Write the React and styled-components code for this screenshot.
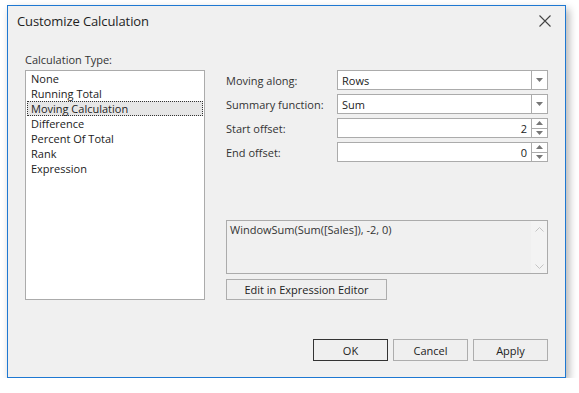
import React from "react";
import styled, { createGlobalStyle } from "styled-components";

const GlobalStyle = createGlobalStyle`
  html, body {
    margin: 0;
    padding: 0;
    background: #ffffff;
  }
  body {
    font-family: "Segoe UI", "Open Sans", "Noto Sans", sans-serif;
    font-size: 11px;
    color: #222222;
  }
`;

const calcTypes = [
  "None",
  "Running Total",
  "Moving Calculation",
  "Difference",
  "Percent Of Total",
  "Rank",
  "Expression"
];

// STYLED COMPONENTS

const Page = styled.div`
  padding: 5px 0 0 7px;
`;

const Window = styled.div`
  box-sizing: border-box;
  width: 559px;
  height: 373px;
  border: 1px solid #1e78d2;
  background: #f0f0f0;
  box-shadow: 3px 4px 8px rgba(0, 0, 0, 0.3);
  display: flex;
  flex-direction: column;
`;

const TitleBar = styled.div`
  height: 30px;
  display: flex;
  align-items: center;
  justify-content: space-between;
  padding: 0 14px 0 9px;
  font-family: "Open Sans", "Noto Sans", sans-serif;
  font-size: 13px;
  letter-spacing: -0.1px;
  color: #1e1e1e;
`;

const CloseButton = styled.svg`
  width: 12px;
  height: 12px;
`;

const Body = styled.div`
  flex: 1;
  display: flex;
  gap: 21px;
  padding: 16px 17px 0 17px;
`;

const LeftColumn = styled.div`
  width: 180px;
  display: flex;
  flex-direction: column;
  gap: 2px;
`;

const Caption = styled.div`
  height: 16px;
  line-height: 16px;
  color: #333333;
`;

const ListBox = styled.div`
  box-sizing: border-box;
  height: 230px;
  border: 1px solid #ababab;
  background: #ffffff;
  padding: 0 1px;
`;

const ListItem = styled.div`
  box-sizing: border-box;
  height: 15px;
  line-height: 13px;
  padding: 0 3px;
  border: 1px ${(p) => (p.$selected ? "dotted #333333" : "solid transparent")};
  background: ${(p) => (p.$selected ? "#e6e6e6" : "transparent")};
  color: #222222;
  white-space: nowrap;
`;

const RightColumn = styled.div`
  width: 322px;
  display: flex;
  flex-direction: column;
  padding-top: 18px;
`;

const FieldRows = styled.div`
  display: flex;
  flex-direction: column;
  gap: 4px;
`;

const FieldRow = styled.div`
  display: flex;
  align-items: center;
  height: 20px;
`;

const FieldLabel = styled.div`
  width: 111px;
  color: #333333;
`;

const Editor = styled.div`
  box-sizing: border-box;
  flex: 1;
  height: 20px;
  border: 1px solid #ababab;
  background: #ffffff;
  display: flex;
  align-items: stretch;
`;

const EditorText = styled.div`
  flex: 1;
  display: flex;
  align-items: center;
  justify-content: ${(p) => (p.$right ? "flex-end" : "flex-start")};
  padding: 0 4px;
  color: #222222;
`;

const DropButton = styled.div`
  width: 15px;
  border-left: 1px solid #ababab;
  display: flex;
  align-items: center;
  justify-content: center;
`;

const SpinButton = styled.div`
  width: 15px;
  border-left: 1px solid #ababab;
  display: flex;
  flex-direction: column;
`;

const SpinHalf = styled.div`
  flex: 1;
  display: flex;
  align-items: center;
  justify-content: center;
  border-top: ${(p) => (p.$down ? "1px solid #ababab" : "none")};
`;

const Memo = styled.div`
  box-sizing: border-box;
  margin-top: 58px;
  height: 54px;
  border: 1px solid #ababab;
  background: #f0f0f0;
  display: flex;
`;

const MemoText = styled.div`
  flex: 1;
  padding: 1px 3px;
  color: #333333;
`;

const MemoScroll = styled.div`
  width: 16px;
  display: flex;
  flex-direction: column;
  justify-content: space-between;
  align-items: center;
  padding: 6px 0 4px;
  background: #f3f3f3;
`;

const Button = styled.button`
  box-sizing: border-box;
  height: ${(p) => p.$height || 22}px;
  width: ${(p) => p.$width}px;
  border: 1px solid ${(p) => (p.$default ? "#333333" : "#adadad")};
  background: #efefef;
  font-family: inherit;
  font-size: 11px;
  color: #222222;
  padding: 0;
  margin: 0;
`;

const EditButton = styled(Button)`
  margin-top: 5px;
`;

const Footer = styled.div`
  display: flex;
  justify-content: flex-end;
  gap: 5px;
  padding: 0 17px 16px 0;
`;

function Arrow({ up, color = "#777777" }) {
  return (
    <svg width="7" height="4" viewBox="0 0 7 4">
      <polygon points={up ? "0,4 7,4 3.5,0" : "0,0 7,0 3.5,4"} fill={color} />
    </svg>
  );
}

function Chevron({ up }) {
  return (
    <svg width="9" height="5" viewBox="0 0 9 5">
      <polyline
        points={up ? "0.5,4.5 4.5,0.5 8.5,4.5" : "0.5,0.5 4.5,4.5 8.5,0.5"}
        fill="none"
        stroke="#c4c4c4"
        strokeWidth="1"
      />
    </svg>
  );
}

function ComboField({ label, value }) {
  return (
    <FieldRow>
      <FieldLabel>{label}</FieldLabel>
      <Editor>
        <EditorText>{value}</EditorText>
        <DropButton>
          <Arrow />
        </DropButton>
      </Editor>
    </FieldRow>
  );
}

function SpinField({ label, value }) {
  return (
    <FieldRow>
      <FieldLabel>{label}</FieldLabel>
      <Editor>
        <EditorText $right>{value}</EditorText>
        <SpinButton>
          <SpinHalf>
            <Arrow up />
          </SpinHalf>
          <SpinHalf $down>
            <Arrow />
          </SpinHalf>
        </SpinButton>
      </Editor>
    </FieldRow>
  );
}

export default function App() {
  return (
    <>
      <GlobalStyle />
      <Page>
        <Window>
          <TitleBar>
            <span>Customize Calculation</span>
            <CloseButton viewBox="0 0 12 12">
              <path d="M0.5 0.5 L11.5 11.5 M11.5 0.5 L0.5 11.5" stroke="#444" strokeWidth="1.1" />
            </CloseButton>
          </TitleBar>
          <Body>
            <LeftColumn>
              <Caption>Calculation Type:</Caption>
              <ListBox>
                {calcTypes.map((t) => (
                  <ListItem key={t} $selected={t === "Moving Calculation"}>
                    {t}
                  </ListItem>
                ))}
              </ListBox>
            </LeftColumn>
            <RightColumn>
              <FieldRows>
                <ComboField label="Moving along:" value="Rows" />
                <ComboField label="Summary function:" value="Sum" />
                <SpinField label="Start offset:" value="2" />
                <SpinField label="End offset:" value="0" />
              </FieldRows>
              <Memo>
                <MemoText>WindowSum(Sum([Sales]), -2, 0)</MemoText>
                <MemoScroll>
                  <Chevron up />
                  <Chevron />
                </MemoScroll>
              </Memo>
              <EditButton $width={161} $height={21}>
                Edit in Expression Editor
              </EditButton>
            </RightColumn>
          </Body>
          <Footer>
            <Button $width={75} $default>
              OK
            </Button>
            <Button $width={75}>Cancel</Button>
            <Button $width={75}>Apply</Button>
          </Footer>
        </Window>
      </Page>
    </>
  );
}
